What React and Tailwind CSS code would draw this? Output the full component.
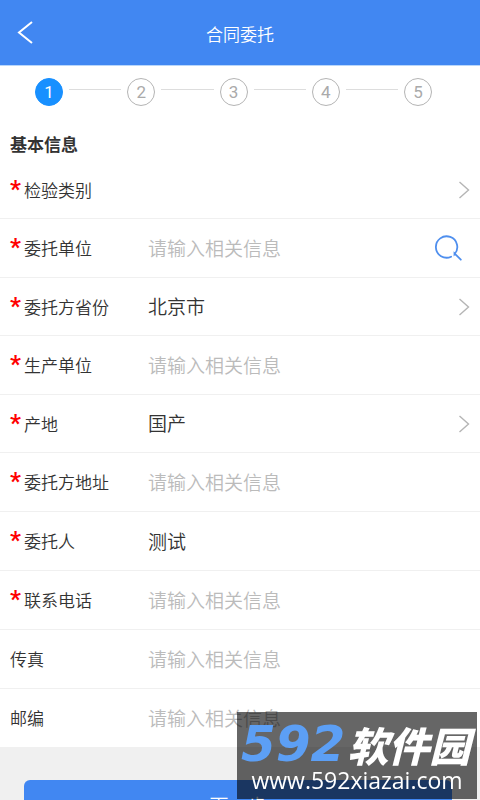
import React from "react";
import clsx from "clsx";

const steps = [1, 2, 3, 4, 5];

const fields = [
  { id: "category", label: "检验类别", required: true, type: "select", value: "" },
  { id: "client", label: "委托单位", required: true, type: "search" },
  { id: "province", label: "委托方省份", required: true, type: "select", value: "北京市" },
  { id: "producer", label: "生产单位", required: true },
  { id: "origin", label: "产地", required: true, type: "select", value: "国产" },
  { id: "address", label: "委托方地址", required: true },
  { id: "contact", label: "委托人", required: true, value: "测试" },
  { id: "phone", label: "联系电话", required: true },
  { id: "fax", label: "传真" },
  { id: "postcode", label: "邮编" },
];

export default function App() {
  return (
    <div className="h-screen overflow-hidden bg-[#f0f0f0] font-['Noto_Sans_CJK_SC',sans-serif] font-[350] text-[#333]">
      <Header title="合同委托" />
      <main>
        <div className="bg-white">
          <Steps current={1} />
          <h2 className="px-2.5 pt-[26px] pb-[5px] text-[17px] leading-6 font-bold">基本信息</h2>
          <form>
            {fields.map((field) => (
              <Field key={field.id} field={field} />
            ))}
          </form>
        </div>
        <div className="pt-8 pr-7 pl-6">
          <button type="button" className="h-[50px] w-full rounded-md bg-[#4187f2] text-[19px] text-white">
            下一步
          </button>
        </div>
      </main>
      <Watermark />
    </div>
  );
}

function Header({ title }) {
  return (
    <header className="grid h-[66px] grid-cols-[48px_1fr_48px] items-center border-b border-[#b8d6fb] bg-[#4187f2] text-white">
      <button type="button" aria-label="返回" className="flex h-full items-center pl-[17px]">
        <svg width="16" height="24" viewBox="0 0 16 24" fill="none" stroke="currentColor" strokeWidth="2">
          <path d="M15 1 L2 11.5 L15 22" />
        </svg>
      </button>
      <h1 className="pt-0.5 text-center text-[17px] leading-6">{title}</h1>
    </header>
  );
}

function Steps({ current }) {
  return (
    <ol className="flex pt-3 pr-12 pl-[35px] font-['Roboto',sans-serif] font-normal">
      {steps.map((step) => (
        <li key={step} className={clsx("flex", step < steps.length && "flex-1")}>
          <span
            className={clsx(
              "flex size-7 shrink-0 items-center justify-center rounded-full border text-[17px] leading-6",
              step === current ? "border-[#1890ff] bg-[#1890ff] text-white" : "border-[#b4b4b4] text-[#aaa]"
            )}
          >
            {step}
          </span>
          {step < steps.length && <span className="mx-1.5 mt-[11px] h-px flex-1 bg-[#ddd]" />}
        </li>
      ))}
    </ol>
  );
}

function Field({ field }) {
  const { id, label, required, type, value } = field;
  const control = "h-full min-w-0 flex-1 appearance-none bg-transparent text-[19px] outline-none";

  return (
    <div className={clsx("flex items-center border-b border-[#f0f0f0] pl-2.5", type === "select" ? "h-[58px]" : "h-[59px]")}>
      <label htmlFor={id} className="flex w-[138px] shrink-0 items-center text-[17px] leading-6">
        {required && (
          <span className="w-3.5 pb-0.5 font-['Roboto',sans-serif] text-[24px] leading-6 font-bold text-[#f00]">*</span>
        )}
        {label}
      </label>
      {type === "select" ? (
        <select id={id} defaultValue={value} className={control}>
          <option value={value}>{value}</option>
        </select>
      ) : (
        <input id={id} defaultValue={value} placeholder="请输入相关信息" className={clsx(control, "pb-0.5 placeholder:text-[#bbb]")} />
      )}
      {type === "select" && <ChevronIcon />}
      {type === "search" && (
        <button type="button" aria-label="搜索" className="mr-[18px] text-[#4f8fee]">
          <SearchIcon />
        </button>
      )}
    </div>
  );
}

function ChevronIcon() {
  return (
    <svg className="mr-2.5 shrink-0" width="12" height="18" viewBox="0 0 12 18" fill="none" stroke="#b5b5b5" strokeWidth="1.4">
      <path d="M1.5 1 L10.5 9 L1.5 17" />
    </svg>
  );
}

function SearchIcon() {
  return (
    <svg width="28" height="28" viewBox="0 0 28 28" fill="none" stroke="currentColor" strokeWidth="1.8" strokeLinecap="round">
      <path d="M17.1 22.7 A10.7 10.7 0 1 1 20.5 20.2 V19.4 L26.8 25.7" />
    </svg>
  );
}

function Watermark() {
  return (
    <div className="fixed right-[3px] bottom-px h-[87px] w-60 bg-black/60 whitespace-nowrap">
      <div className="flex items-center gap-0.5 pt-3 pl-1 leading-10 italic">
        <span className="font-['DejaVu_Sans',sans-serif] text-[50px] font-bold text-[#5c9ff5]">592</span>
        <span className="text-[41px] font-black text-white">软件园</span>
      </div>
      <p className="text-center font-['Open_Sans',sans-serif] text-[23px] leading-8 font-medium text-white">
        www.592xiazai.com
      </p>
    </div>
  );
}
